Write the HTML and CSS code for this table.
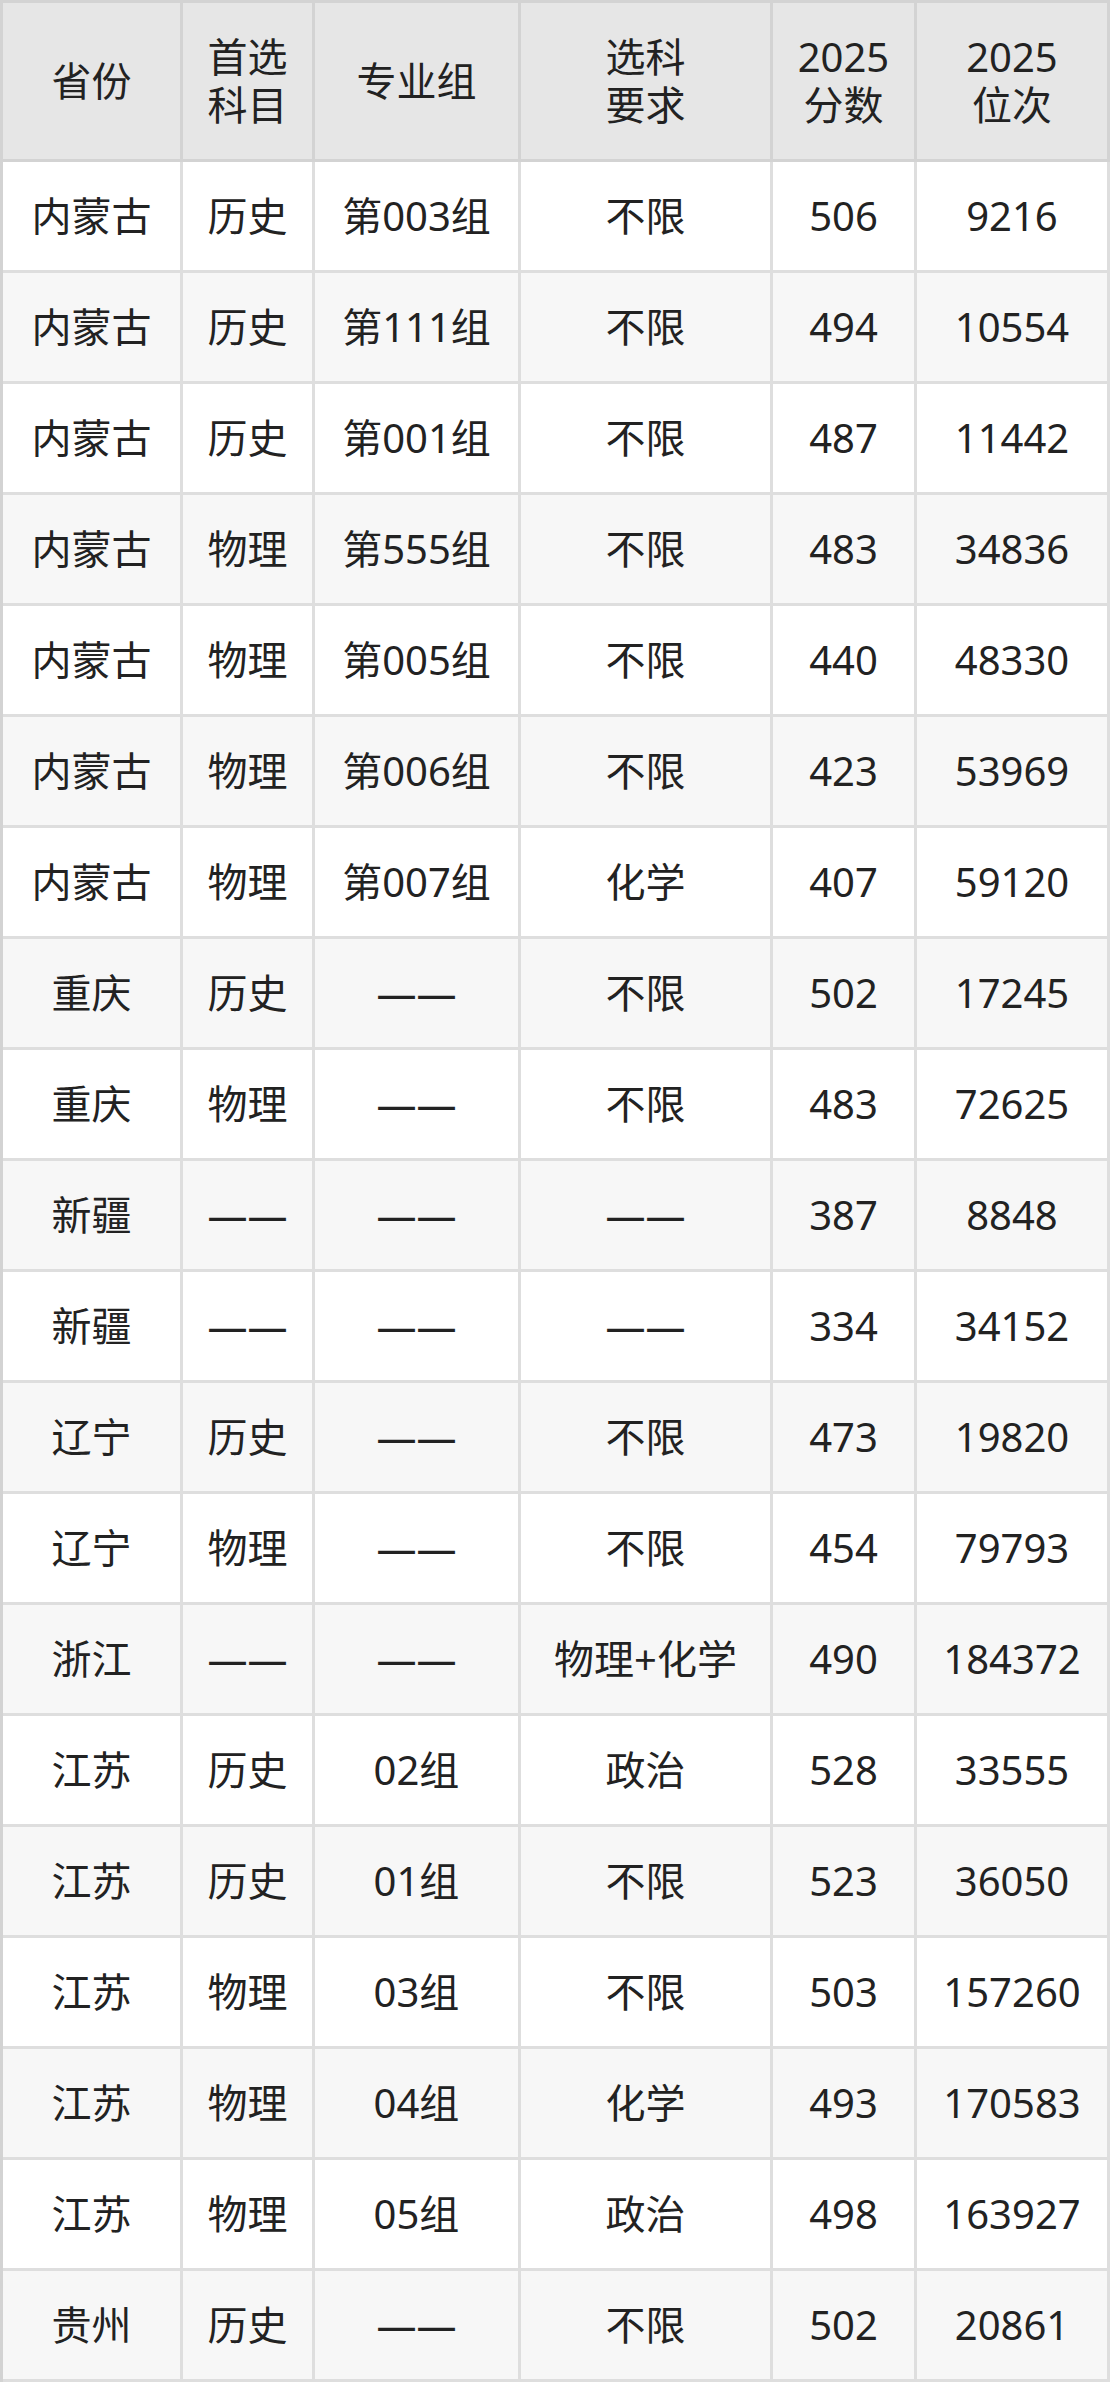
FILE: index.html
```html
<!DOCTYPE html>
<html lang="zh">
<head>
<meta charset="utf-8">
<title>分数位次</title>
<link rel="stylesheet" href="styles.css">
</head>
<body>
<table class="score-table">
  <thead>
    <tr>
      <th class="c1">省份</th>
      <th class="c2">首选<br>科目</th>
      <th class="c3">专业组</th>
      <th class="c4">选科<br>要求</th>
      <th class="c5">2025<br>分数</th>
      <th class="c6">2025<br>位次</th>
    </tr>
  </thead>
  <tbody>
    <tr><td>内蒙古</td><td>历史</td><td>第003组</td><td>不限</td><td>506</td><td>9216</td></tr>
    <tr><td>内蒙古</td><td>历史</td><td>第111组</td><td>不限</td><td>494</td><td>10554</td></tr>
    <tr><td>内蒙古</td><td>历史</td><td>第001组</td><td>不限</td><td>487</td><td>11442</td></tr>
    <tr><td>内蒙古</td><td>物理</td><td>第555组</td><td>不限</td><td>483</td><td>34836</td></tr>
    <tr><td>内蒙古</td><td>物理</td><td>第005组</td><td>不限</td><td>440</td><td>48330</td></tr>
    <tr><td>内蒙古</td><td>物理</td><td>第006组</td><td>不限</td><td>423</td><td>53969</td></tr>
    <tr><td>内蒙古</td><td>物理</td><td>第007组</td><td>化学</td><td>407</td><td>59120</td></tr>
    <tr><td>重庆</td><td>历史</td><td>——</td><td>不限</td><td>502</td><td>17245</td></tr>
    <tr><td>重庆</td><td>物理</td><td>——</td><td>不限</td><td>483</td><td>72625</td></tr>
    <tr><td>新疆</td><td>——</td><td>——</td><td>——</td><td>387</td><td>8848</td></tr>
    <tr><td>新疆</td><td>——</td><td>——</td><td>——</td><td>334</td><td>34152</td></tr>
    <tr><td>辽宁</td><td>历史</td><td>——</td><td>不限</td><td>473</td><td>19820</td></tr>
    <tr><td>辽宁</td><td>物理</td><td>——</td><td>不限</td><td>454</td><td>79793</td></tr>
    <tr><td>浙江</td><td>——</td><td>——</td><td>物理+化学</td><td>490</td><td>184372</td></tr>
    <tr><td>江苏</td><td>历史</td><td>02组</td><td>政治</td><td>528</td><td>33555</td></tr>
    <tr><td>江苏</td><td>历史</td><td>01组</td><td>不限</td><td>523</td><td>36050</td></tr>
    <tr><td>江苏</td><td>物理</td><td>03组</td><td>不限</td><td>503</td><td>157260</td></tr>
    <tr><td>江苏</td><td>物理</td><td>04组</td><td>化学</td><td>493</td><td>170583</td></tr>
    <tr><td>江苏</td><td>物理</td><td>05组</td><td>政治</td><td>498</td><td>163927</td></tr>
    <tr><td>贵州</td><td>历史</td><td>——</td><td>不限</td><td>502</td><td>20861</td></tr>
  </tbody>
</table>
</body>
</html>
```

FILE: styles.css
```css
html, body {
  margin: 0;
  padding: 0;
  background: #ffffff;
}

.score-table {
  table-layout: fixed;
  width: 1110px;
  border-collapse: separate;
  border-spacing: 0;
  border-top: 3px solid #d3d3d3;
  border-left: 3px solid #d3d3d3;
  font-family: "Noto Sans", "Noto Sans CJK SC", sans-serif;
  font-size: 40px;
  color: #222222;
}

.score-table th,
.score-table td {
  box-sizing: border-box;
  padding: 0;
  text-align: center;
  vertical-align: middle;
  font-weight: normal;
  white-space: nowrap;
}

.score-table th {
  height: 159px;
  line-height: 48px;
  background: #e6e6e6;
  border-right: 3px solid #d3d3d3;
  border-bottom: 3px solid #d3d3d3;
}

.score-table td {
  height: 111px;
  line-height: 48px;
  border-right: 3px solid #dedede;
  border-bottom: 3px solid #dedede;
}

.score-table tbody tr:nth-child(odd) td {
  background: #ffffff;
}

.score-table tbody tr:nth-child(even) td {
  background: #f7f7f7;
}

.c1 { width: 180px; }
.c2 { width: 132px; }
.c3 { width: 206px; }
.c4 { width: 252px; }
.c5 { width: 144px; }
.c6 { width: 193px; }
```
